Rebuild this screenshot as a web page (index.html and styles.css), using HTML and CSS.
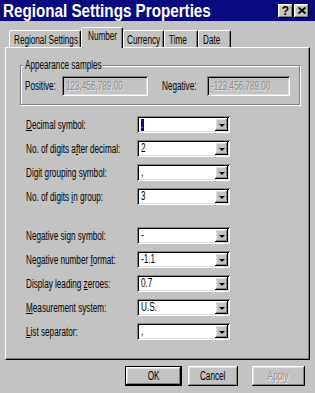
FILE: index.html
```html
<!DOCTYPE html>
<html lang="en">
<head>
  <meta charset="UTF-8">
  <title>Regional Settings Properties</title>
  <link rel="stylesheet" href="styles.css">
</head>
<body>
  <div id="dialog">
    <!-- Title bar -->
    <div class="titlebar">
      <span class="title">Regional Settings Properties</span>
      <div class="caption-btns">
        <span class="cap-btn raised">?</span>
        <span class="cap-btn raised">
          <svg width="8" height="7" viewBox="0 0 8 7"><path d="M0.5 0.5 L7.5 6.5 M7.5 0.5 L0.5 6.5" stroke="#000" stroke-width="1.8"/></svg>
        </span>
      </div>
    </div>

    <!-- Tabs -->
    <div class="tabs">
      <div class="tab tab-regional"><span class="n">Regional Settings</span></div>
      <div class="tab tab-number on"><span class="n">Number</span></div>
      <div class="tab tab-currency"><span class="n">Currency</span></div>
      <div class="tab tab-time"><span class="n">Time</span></div>
      <div class="tab tab-date"><span class="n">Date</span></div>
    </div>

    <!-- Tab page -->
    <div class="panel">
      <div class="group">
        <span class="group-title"><span class="n">Appearance samples</span></span>
        <div class="sample-row">
          <span class="lab-pos"><span class="n">Positive:</span></span>
          <div class="field field-pos sunken"><span class="n">123,456,789.00</span></div>
          <span class="lab-neg"><span class="n">Negative:</span></span>
          <div class="field field-neg sunken"><span class="n">-123,456,789.00</span></div>
        </div>
      </div>

      <div class="settings">
        <div class="row">
          <span class="lab"><span class="n"><u>D</u>ecimal symbol:</span></span>
          <div class="combo sunken"><span class="val"><span class="sel">.</span></span><span class="drop raised"></span></div>
        </div>
        <div class="row">
          <span class="lab"><span class="n">No. of digits a<u>f</u>ter decimal:</span></span>
          <div class="combo sunken"><span class="val"><span class="n">2</span></span><span class="drop raised"></span></div>
        </div>
        <div class="row">
          <span class="lab"><span class="n">Digit <u>g</u>rouping symbol:</span></span>
          <div class="combo sunken"><span class="val"><span class="n">,</span></span><span class="drop raised"></span></div>
        </div>
        <div class="row">
          <span class="lab"><span class="n">No. of digits <u>i</u>n group:</span></span>
          <div class="combo sunken"><span class="val"><span class="n">3</span></span><span class="drop raised"></span></div>
        </div>
      </div>

      <div class="settings settings-neg">
        <div class="row">
          <span class="lab"><span class="n">Ne<u>g</u>ative sign symbol:</span></span>
          <div class="combo sunken"><span class="val"><span class="n">-</span></span><span class="drop raised"></span></div>
        </div>
        <div class="row">
          <span class="lab"><span class="n">Negative number <u>f</u>ormat:</span></span>
          <div class="combo sunken"><span class="val"><span class="n">-1.1</span></span><span class="drop raised"></span></div>
        </div>
        <div class="row">
          <span class="lab"><span class="n">Display leading <u>z</u>eroes:</span></span>
          <div class="combo sunken"><span class="val"><span class="n">0.7</span></span><span class="drop raised"></span></div>
        </div>
        <div class="row">
          <span class="lab"><span class="n"><u>M</u>easurement system:</span></span>
          <div class="combo sunken"><span class="val"><span class="n">U.S.</span></span><span class="drop raised"></span></div>
        </div>
        <div class="row">
          <span class="lab"><span class="n"><u>L</u>ist separator:</span></span>
          <div class="combo sunken"><span class="val"><span class="n">,</span></span><span class="drop raised"></span></div>
        </div>
      </div>
    </div>

    <!-- Dialog buttons -->
    <div class="buttons">
      <div class="btn btn-ok raised"><span class="c">OK</span></div>
      <div class="btn btn-cancel raised"><span class="c">Cancel</span></div>
      <div class="btn btn-apply raised disabled"><span class="c">Apply</span></div>
    </div>
  </div>
</body>
</html>
```

FILE: styles.css
```css
* {
  box-sizing: border-box;
}
body {
  margin: 0;
  overflow: hidden;
  background: #c3c3c3;
  font-family: "Liberation Sans", Arial, sans-serif;
  font-size: 12px;
  color: #000;
}
#dialog {
  width: 315px;
  height: 393px;
}
/* screenshot is squeezed sideways, so text is narrowed */
.n,
.c,
.title {
  display: inline-block;
  white-space: nowrap;
  transform: scaleX(0.68);
  transform-origin: 0 50%;
}
.c {
  transform-origin: 50% 50%;
}
u {
  text-decoration-thickness: 1px;
  text-underline-offset: 1px;
}

/* bevels */
.raised {
  background: #c3c3c3;
  box-shadow: inset -1px -1px #000, inset 1px 1px #fff, inset -2px -2px #808080, inset 2px 2px #dfdfdf;
}
.sunken {
  box-shadow: inset 1px 1px #808080, inset -1px -1px #fff, inset 2px 2px #000, inset -2px -2px #dfdfdf;
}

/* title bar */
.titlebar {
  height: 21px;
  background: #0a0a80;
  display: flex;
  align-items: center;
  padding: 0 6px 0 3px;
}
.title {
  flex: none;
  color: #fff;
  font-weight: bold;
  font-size: 19px;
  transform: scaleX(0.8);
}
.caption-btns {
  margin-left: auto;
  display: flex;
  gap: 1px;
}
.cap-btn {
  width: 15px;
  height: 14px;
  display: flex;
  align-items: center;
  justify-content: center;
  font-weight: bold;
  font-size: 12px;
  line-height: 1;
}

/* tabs */
.tabs {
  display: flex;
  align-items: flex-end;
  height: 20px;
  margin-top: 6px;
  padding-left: 9px;
}
.tab {
  height: 17px;
  padding: 2px 0 0 4px;
  border: 1px solid;
  border-color: #fff #000 transparent #fff;
  border-bottom: none;
  border-radius: 2px 2px 0 0;
  box-shadow: inset -1px 0 #808080;
  background: #c3c3c3;
  line-height: 14px;
}
.tab.on {
  height: 21px;
  margin-bottom: -1px;
  padding-top: 1px;
  position: relative;
  z-index: 1;
}
.tab-regional { width: 72px; }
.tab-number { width: 42px; padding-left: 6px; }
.tab-currency { width: 41px; padding-left: 3px; }
.tab-time { width: 34px; }
.tab-date { width: 33px; }

/* tab page */
.panel {
  margin: 0 5px;
  height: 313px;
  border: 1px solid;
  border-color: #fff #000 #000 #fff;
  box-shadow: inset -1px -1px #808080;
  padding: 0 0 0 14px;
  line-height: 14px;
}

.group {
  width: 280px;
  margin-top: 17px;
  border: 1px solid #808080;
  box-shadow: 1px 1px 0 #fff, inset 1px 1px 0 #fff;
  padding: 0 4px 8px;
}
.group-title {
  display: block;
  width: 79px;
  height: 14px;
  margin: -8px 0 0 -2px;
  padding: 0 2px;
  background: #c3c3c3;
}
.sample-row {
  display: flex;
  align-items: center;
  margin-top: 4px;
}
.lab-pos {
  flex: none;
  width: 37px;
}
.lab-neg {
  flex: none;
  width: 45px;
  margin-left: 14px;
}
.field {
  flex: none;
  height: 20px;
  padding: 3px 0 0 4px;
  color: #8a8a8a;
  text-shadow: 1px 1px 0 #e8e8e8;
}
.field-pos { width: 86px; }
.field-neg { width: 83px; }

/* label + combo rows */
.settings {
  display: flex;
  flex-direction: column;
  gap: 7px;
  margin-top: 11px;
  padding-left: 6px;
}
.settings-neg {
  margin-top: 22px;
}
.row {
  display: flex;
  align-items: center;
  height: 17px;
}
.lab {
  flex: none;
  width: 111px;
}
.combo {
  flex: none;
  width: 93px;
  height: 17px;
  background: #fff;
  display: flex;
  padding: 2px;
}
.val {
  flex: 1;
  padding-left: 2px;
  line-height: 13px;
  overflow: hidden;
}
.sel {
  display: inline-block;
  width: 3px;
  height: 12px;
  margin-top: 1px;
  background: #0a0a80;
  color: #fff;
  font-size: 8px;
}
.drop {
  flex: none;
  width: 13px;
  height: 13px;
  display: flex;
  align-items: center;
  justify-content: center;
}
.drop::after {
  content: "";
  border-left: 3px solid transparent;
  border-right: 3px solid transparent;
  border-top: 3px solid #000;
  margin-top: 1px;
}

/* bottom buttons */
.buttons {
  display: flex;
  justify-content: flex-end;
  margin-top: 6px;
  padding-right: 10px;
}
.btn {
  height: 20px;
  display: flex;
  align-items: center;
  justify-content: center;
}
.btn-ok {
  border: 1px solid #000;
  width: 57px;
}
.btn-cancel {
  width: 50px;
  margin-left: 6px;
}
.btn-apply {
  width: 53px;
  margin-left: 14px;
}
.disabled {
  color: #8a8a8a;
  text-shadow: 1px 1px 0 #fff;
}
```
